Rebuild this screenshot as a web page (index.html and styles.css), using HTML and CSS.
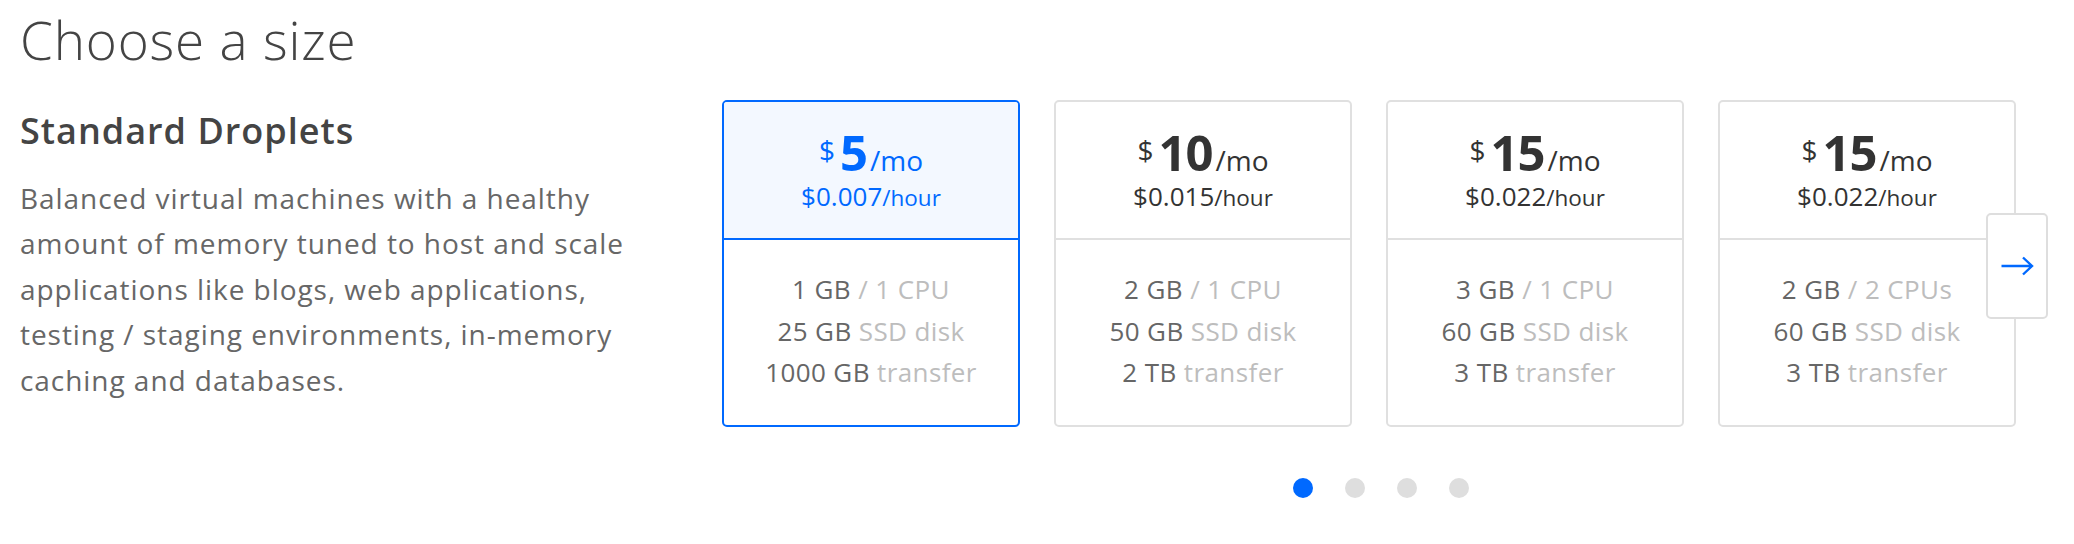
FILE: index.html
```html
<!DOCTYPE html>
<html lang="en">
<head>
<meta charset="utf-8">
<title>Choose a size</title>
<link rel="stylesheet" href="styles.css">
</head>
<body>
<div class="page">
  <h1 class="title">Choose a size</h1>
  <div class="row">
    <div class="intro">
      <h2 class="subtitle">Standard Droplets</h2>
      <p class="desc">Balanced virtual machines with a healthy amount of memory tuned to host and scale applications like blogs, web applications, testing / staging environments, in-memory caching and databases.</p>
    </div>
    <div class="carousel">
      <div class="cards">
        <div class="card selected">
          <div class="card-head">
            <div class="price"><span class="cur">$</span><span class="amt">5</span><span class="per">/mo</span></div>
            <div class="hourly"><span class="hv">$0.007</span><span class="hu">/hour</span></div>
          </div>
          <div class="card-body">
            <div class="spec"><span class="v">1 GB</span> <span class="l">/ 1 CPU</span></div>
            <div class="spec"><span class="v">25 GB</span> <span class="l">SSD disk</span></div>
            <div class="spec"><span class="v">1000 GB</span> <span class="l">transfer</span></div>
          </div>
        </div>
        <div class="card">
          <div class="card-head">
            <div class="price"><span class="cur">$</span><span class="amt">10</span><span class="per">/mo</span></div>
            <div class="hourly"><span class="hv">$0.015</span><span class="hu">/hour</span></div>
          </div>
          <div class="card-body">
            <div class="spec"><span class="v">2 GB</span> <span class="l">/ 1 CPU</span></div>
            <div class="spec"><span class="v">50 GB</span> <span class="l">SSD disk</span></div>
            <div class="spec"><span class="v">2 TB</span> <span class="l">transfer</span></div>
          </div>
        </div>
        <div class="card">
          <div class="card-head">
            <div class="price"><span class="cur">$</span><span class="amt">15</span><span class="per">/mo</span></div>
            <div class="hourly"><span class="hv">$0.022</span><span class="hu">/hour</span></div>
          </div>
          <div class="card-body">
            <div class="spec"><span class="v">3 GB</span> <span class="l">/ 1 CPU</span></div>
            <div class="spec"><span class="v">60 GB</span> <span class="l">SSD disk</span></div>
            <div class="spec"><span class="v">3 TB</span> <span class="l">transfer</span></div>
          </div>
        </div>
        <div class="card">
          <div class="card-head">
            <div class="price"><span class="cur">$</span><span class="amt">15</span><span class="per">/mo</span></div>
            <div class="hourly"><span class="hv">$0.022</span><span class="hu">/hour</span></div>
          </div>
          <div class="card-body">
            <div class="spec"><span class="v">2 GB</span> <span class="l">/ 2 CPUs</span></div>
            <div class="spec"><span class="v">60 GB</span> <span class="l">SSD disk</span></div>
            <div class="spec"><span class="v">3 TB</span> <span class="l">transfer</span></div>
          </div>
        </div>
      </div>
      <button class="next" type="button" aria-label="Next">
        <svg width="34" height="20" viewBox="0 0 34 20"><path d="M1.5 10 H32 M23 1.5 L32 10 L23 18.5" fill="none" stroke="#0069ff" stroke-width="2.4"/></svg>
      </button>
      <div class="dots">
        <span class="dot active"></span>
        <span class="dot"></span>
        <span class="dot"></span>
        <span class="dot"></span>
      </div>
    </div>
  </div>
</div>
</body>
</html>
```
FILE: styles.css
```css
* { box-sizing: border-box; }
html, body { margin: 0; padding: 0; background: #fff; }
body { font-family: "Open Sans", "Liberation Sans", sans-serif; }

.page { padding: 8px 0 0 20px; }

.title {
  margin: 0;
  font-size: 53px;
  line-height: 64px;
  font-weight: 300;
  color: #444;
  letter-spacing: 0.8px;
}

.row { display: flex; margin-top: 28px; }

.intro { width: 702px; flex: none; }

.subtitle {
  margin: 10px 0 0;
  font-size: 36px;
  line-height: 42px;
  font-weight: 600;
  color: #444;
  letter-spacing: 1px;
}

.desc {
  margin: 24px 0 0;
  width: 650px;
  font-size: 28px;
  line-height: 45.4px;
  color: #676767;
  letter-spacing: 0.95px;
}

.carousel { position: relative; width: 1318px; flex: none; }

.cards { display: flex; gap: 34px; }

.card {
  width: 298px;
  height: 327px;
  border: 2px solid #e0e0e0;
  border-radius: 5px;
  display: flex;
  flex-direction: column;
  overflow: hidden;
  text-align: center;
}

.card-head {
  height: 138px;
  padding-top: 27px;
  border-bottom: 2px solid #e0e0e0;
  color: #333;
}

.price {
  font-size: 49px;
  line-height: 46px;
  font-weight: 700;
}
.cur {
  font-size: 28px;
  line-height: 1;
  font-weight: 400;
  vertical-align: 10px;
  margin-right: 5px;
}
.amt { letter-spacing: -1px; }
.per {
  font-size: 28px;
  line-height: 1;
  font-weight: 400;
  margin-left: 3px;
}

.hourly {
  margin-top: 3px;
  font-size: 26px;
  line-height: 36px;
}
.hu { font-size: 22.5px; }

.card-body { padding-top: 29px; }
.spec {
  font-size: 26px;
  line-height: 41.7px;
  letter-spacing: 0.4px;
}
.spec .v { color: #666; }
.spec .l { color: #bdbdbd; }

.card.selected { border-color: #0069ff; }
.card.selected .card-head {
  background: #f3f8ff;
  border-bottom-color: #0069ff;
  color: #0069ff;
}

.next {
  position: absolute;
  left: 1264px;
  top: 113px;
  width: 62px;
  height: 106px;
  padding: 0;
  border: 2px solid #dedede;
  border-radius: 5px;
  background: #fff;
  display: flex;
  align-items: center;
  justify-content: center;
  cursor: pointer;
}

.dots {
  display: flex;
  justify-content: center;
  gap: 32px;
  margin-top: 51px;
}
.dot {
  width: 20px;
  height: 20px;
  border-radius: 50%;
  background: #dedede;
}
.dot.active { background: #0069ff; }
```
